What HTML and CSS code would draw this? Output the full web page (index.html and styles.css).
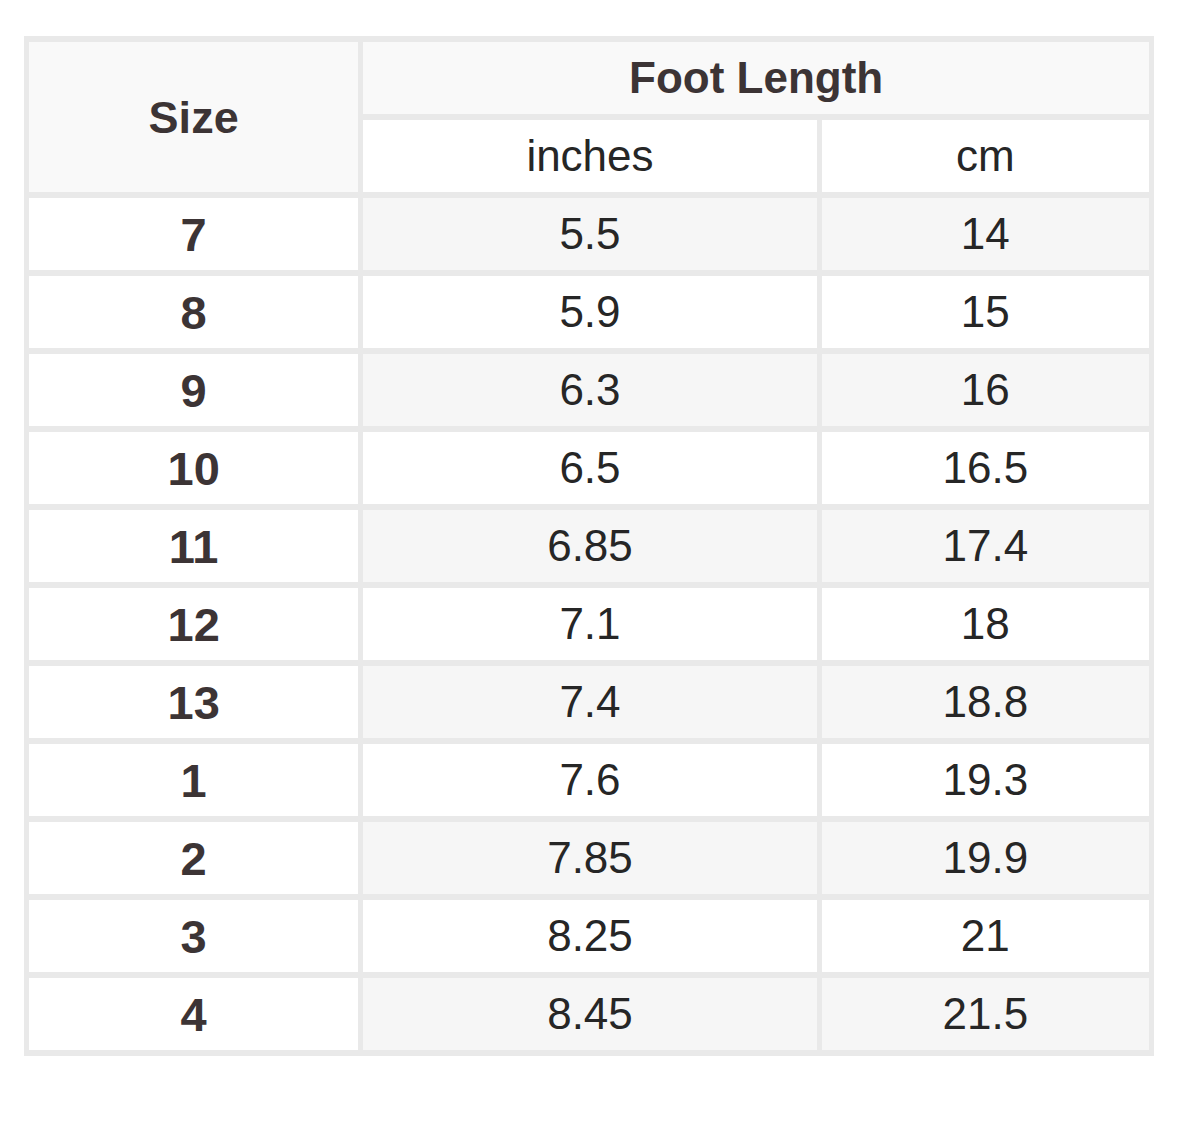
FILE: index.html
```html
<!DOCTYPE html>
<html lang="en">
<head>
<meta charset="utf-8">
<title>Size Chart</title>
<link rel="stylesheet" href="styles.css">
</head>
<body>
<table class="chart">
  <colgroup>
    <col class="c-size">
    <col class="c-in">
    <col class="c-cm">
  </colgroup>
  <thead>
    <tr>
      <th class="h-main h-size" rowspan="2">Size</th>
      <th class="h-main" colspan="2">Foot Length</th>
    </tr>
    <tr>
      <th class="h-sub">inches</th>
      <th class="h-sub">cm</th>
    </tr>
  </thead>
  <tbody>
    <tr class="shade"><td class="size">7</td><td>5.5</td><td>14</td></tr>
    <tr><td class="size">8</td><td>5.9</td><td>15</td></tr>
    <tr class="shade"><td class="size">9</td><td>6.3</td><td>16</td></tr>
    <tr><td class="size">10</td><td>6.5</td><td>16.5</td></tr>
    <tr class="shade"><td class="size">11</td><td>6.85</td><td>17.4</td></tr>
    <tr><td class="size">12</td><td>7.1</td><td>18</td></tr>
    <tr class="shade"><td class="size">13</td><td>7.4</td><td>18.8</td></tr>
    <tr><td class="size">1</td><td>7.6</td><td>19.3</td></tr>
    <tr class="shade"><td class="size">2</td><td>7.85</td><td>19.9</td></tr>
    <tr><td class="size">3</td><td>8.25</td><td>21</td></tr>
    <tr class="shade"><td class="size">4</td><td>8.45</td><td>21.5</td></tr>
  </tbody>
</table>
</body>
</html>
```

FILE: styles.css
```css
html, body {
  margin: 0;
  padding: 0;
  background: #ffffff;
}

body {
  font-family: "Liberation Sans", Arial, sans-serif;
}

.chart {
  margin: 36px 0 0 24px;
  border-collapse: separate;
  border-spacing: 5px 6px;
  background: #e9e9e9;
  table-layout: fixed;
  width: 1130px;
}

.c-size { width: 329px; }
.c-in { width: 453px; }
.c-cm { width: 327px; }

.chart th,
.chart td {
  padding: 0;
  height: 72px;
  text-align: center;
  vertical-align: middle;
  font-size: 44px;
  line-height: 1;
}

.h-main {
  background: #f9f9f9;
  color: #3c3435;
  font-weight: bold;
  font-size: 43px;
}

.chart th.h-size {
  font-size: 45px;
}

.h-sub {
  background: #ffffff;
  color: #262626;
  font-weight: normal;
}

.chart td {
  background: #ffffff;
  color: #262626;
}

.chart tr.shade td {
  background: #f6f6f6;
}

.chart td.size,
.chart tr.shade td.size {
  background: #ffffff;
  color: #3c3435;
  font-weight: bold;
  font-size: 47px;
}
```
